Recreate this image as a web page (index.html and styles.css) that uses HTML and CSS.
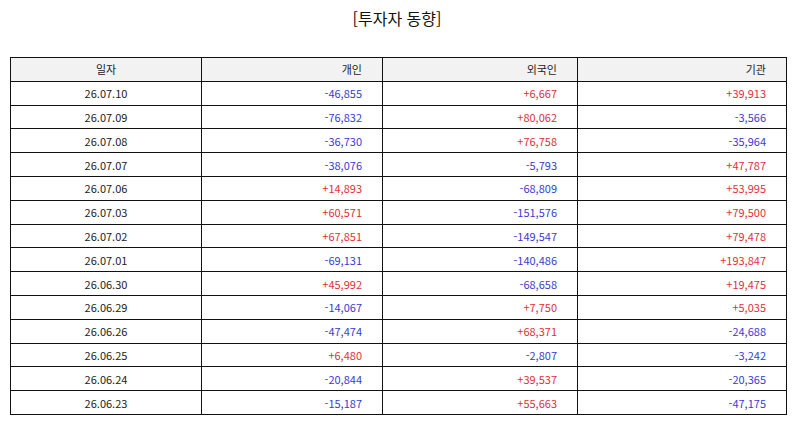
FILE: index.html
```html
<!DOCTYPE html>
<html lang="ko">
<head>
<meta charset="utf-8">
<title>투자자 동향</title>
<link rel="stylesheet" href="styles.css">
</head>
<body>
<h1 class="title">[투자자 동향]</h1>
<table class="flow">
  <colgroup>
    <col class="c-date"><col class="c-ind"><col class="c-for"><col class="c-inst">
  </colgroup>
  <thead>
    <tr><th class="center">일자</th><th>개인</th><th>외국인</th><th>기관</th></tr>
  </thead>
  <tbody>
    <tr><td class="center">26.07.10</td><td class="dn">-46,855</td><td class="up">+6,667</td><td class="up">+39,913</td></tr>
    <tr><td class="center">26.07.09</td><td class="dn">-76,832</td><td class="up">+80,062</td><td class="dn">-3,566</td></tr>
    <tr><td class="center">26.07.08</td><td class="dn">-36,730</td><td class="up">+76,758</td><td class="dn">-35,964</td></tr>
    <tr><td class="center">26.07.07</td><td class="dn">-38,076</td><td class="dn">-5,793</td><td class="up">+47,787</td></tr>
    <tr><td class="center">26.07.06</td><td class="up">+14,893</td><td class="dn">-68,809</td><td class="up">+53,995</td></tr>
    <tr><td class="center">26.07.03</td><td class="up">+60,571</td><td class="dn">-151,576</td><td class="up">+79,500</td></tr>
    <tr><td class="center">26.07.02</td><td class="up">+67,851</td><td class="dn">-149,547</td><td class="up">+79,478</td></tr>
    <tr><td class="center">26.07.01</td><td class="dn">-69,131</td><td class="dn">-140,486</td><td class="up">+193,847</td></tr>
    <tr><td class="center">26.06.30</td><td class="up">+45,992</td><td class="dn">-68,658</td><td class="up">+19,475</td></tr>
    <tr><td class="center">26.06.29</td><td class="dn">-14,067</td><td class="up">+7,750</td><td class="up">+5,035</td></tr>
    <tr><td class="center">26.06.26</td><td class="dn">-47,474</td><td class="up">+68,371</td><td class="dn">-24,688</td></tr>
    <tr><td class="center">26.06.25</td><td class="up">+6,480</td><td class="dn">-2,807</td><td class="dn">-3,242</td></tr>
    <tr><td class="center">26.06.24</td><td class="dn">-20,844</td><td class="up">+39,537</td><td class="dn">-20,365</td></tr>
    <tr><td class="center">26.06.23</td><td class="dn">-15,187</td><td class="up">+55,663</td><td class="dn">-47,175</td></tr>
  </tbody>
</table>
</body>
</html>
```

FILE: styles.css
```css
html, body {
  margin: 0;
  padding: 0;
  background: #ffffff;
}
body {
  font-family: "Noto Sans CJK KR", "Noto Sans", sans-serif;
  color: #222222;
}
.title {
  margin: 7px 0 0 0;
  font-size: 16px;
  line-height: 22px;
  font-weight: normal;
  text-align: center;
  color: #111111;
}
.flow {
  margin: 28px 0 0 10px;
  width: 776px;
  border-collapse: collapse;
  table-layout: fixed;
  font-size: 11px;
}
.c-date { width: 191px; }
.c-ind { width: 181px; }
.c-for { width: 195px; }
.c-inst { width: 209px; }
.flow th, .flow td {
  border: 1px solid #111111;
  height: 22.8px;
  padding: 0 20px 0 4px;
  text-align: right;
  font-weight: normal;
  line-height: 14px;
  white-space: nowrap;
}
.flow th {
  background: #f2f2f2;
  color: #222222;
}
.flow .center {
  text-align: center;
  padding: 0;
}
.up { color: #e0303a; }
.dn { color: #3a3ad0; }
```
